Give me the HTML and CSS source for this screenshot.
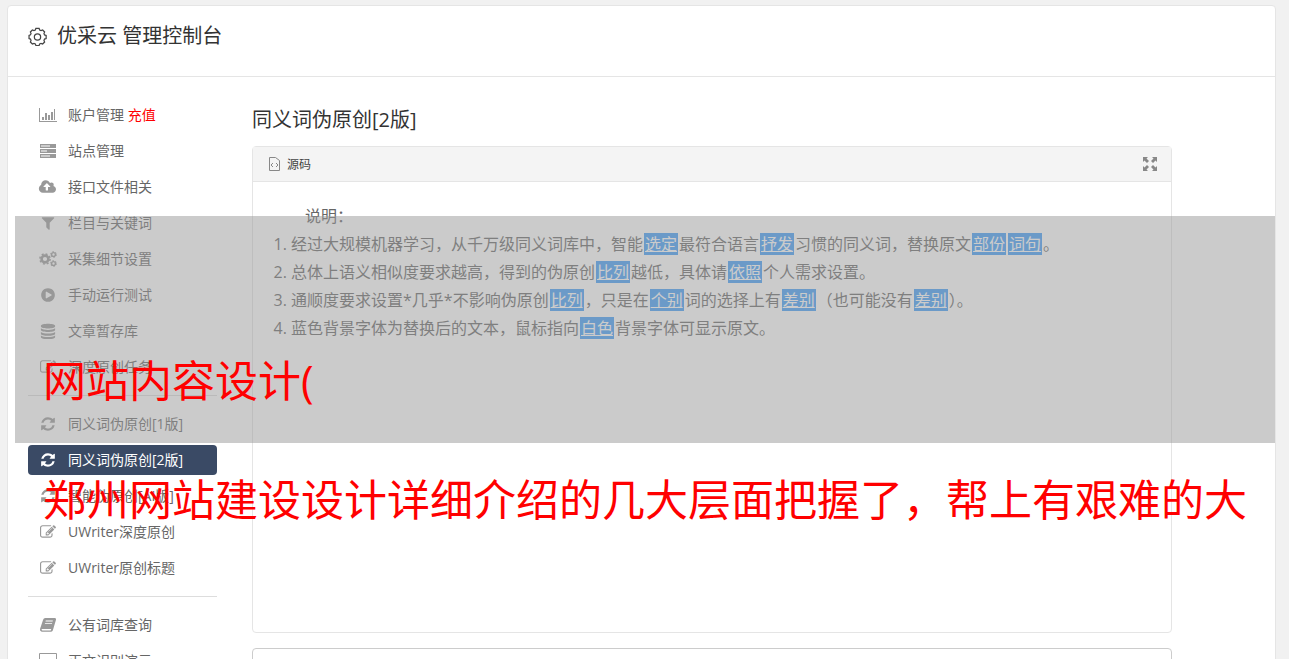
FILE: index.html
```
<!DOCTYPE html>
<html lang="zh-CN">
<head>
  <meta charset="UTF-8">
  <meta name="viewport" content="width=device-width, initial-scale=1.0">
  <title>优采云 管理控制台</title>
  <link rel="stylesheet" href="styles.css">
</head>
<body>

  <!-- Shared icons -->
  <svg class="sprite" aria-hidden="true">
    <symbol id="i-refresh" viewBox="0 0 1792 1792"><path d="M1639 1056q0 5-1 7-64 268-268 434.500t-478 166.500q-146 0-282.500-55t-243.500-157l-129 129q-19 19-45 19t-45-19-19-45v-448q0-26 19-45t45-19h448q26 0 45 19t19 45-19 45l-137 137q71 66 161 102t187 36q134 0 250-65t186-179q11-17 53-117 8-23 30-23h192q13 0 22.500 9.500t9.500 22.500zm25-800v448q0 26-19 45t-45 19h-448q-26 0-45-19t-19-45 19-45l138-138q-148-137-349-137-134 0-250 65t-186 179q-11 17-53 117-8 23-30 23h-199q-13 0-22.500-9.500t-9.500-22.500v-7q65-268 270-434.500t480-166.500q146 0 284 55.500t245 156.500l130-129q19-19 45-19t45 19 19 45z"/></symbol>
    <symbol id="i-edit" viewBox="0 0 1792 1792"><path d="M888 1184l116-116-152-152-116 116v56h96v96h56zm440-720q-16-16-33 1l-350 350q-17 17-1 33t33-1l350-350q17-17 1-33zm80 594v190q0 119-84.500 203.500t-203.500 84.500h-832q-119 0-203.500-84.500t-84.500-203.500v-832q0-119 84.500-203.500t203.500-84.500h832q63 0 117 25 15 7 18 23 3 17-9 29l-49 49q-14 14-32 8-23-6-45-6h-832q-66 0-113 47t-47 113v832q0 66 47 113t113 47h832q66 0 113-47t47-113v-126q0-13 9-22l64-64q15-15 35-7t20 29zm-96-738l288 288-672 672h-288v-288zm444 132l-92 92-288-288 92-92q28-28 68-28t68 28l152 152q28 28 28 68t-28 68z"/></symbol>
  </svg>

  <div class="panel">
    <header class="panel-header">
      <svg class="gear" viewBox="0 0 20 20" aria-hidden="true">
        <path d="M8.300 1.500h3.400l.6 1.700 1.400.6 1.700-.7 2.100 2.100-.7 1.700.6 1.400 1.700.6v3.200l-1.700.6-.6 1.400.7 1.700-2.100 2.100-1.700-.7-1.400.6-.6 1.700H8.300l-.6-1.700-1.400-.6-1.700.7-2.100-2.100.7-1.700-.6-1.400-1.500-.6V8.900l1.500-.6.6-1.400-.7-1.700 2.100-2.100 1.700.7 1.400-.6z"/>
        <circle cx="10" cy="10.500" r="3.300"/>
      </svg>
      <h1>优采云 管理控制台</h1>
    </header>

    <div class="panel-body">
      <!-- Sidebar -->
      <nav class="sidebar">
        <a class="item" href="#">
          <svg class="icon" viewBox="0 2 20 16"><path d="M1 3h1v13h17v1H1zM4 12h2v3H4zM7 8h2v7H7zM10 10h2v5h-2zM13 7h2v8h-2zM16 4h1v11h-1z"/></svg>
          <span>账户管理 <em>充值</em></span>
        </a>
        <a class="item" href="#">
          <svg class="icon" viewBox="0 2 20 16"><path fill-rule="evenodd" d="M2 3h16v4H2zM3 4.500v1h9v-1zM2 8h16v4H2zM3 9.500v1h6v-1zM2 13h16v4H2zM3 14.500v1h9v-1z"/></svg>
          <span>站点管理</span>
        </a>
        <a class="item" href="#">
          <svg class="icon" viewBox="0 0 1920 1792"><path d="M1216 864q0-14-9-23l-352-352q-9-9-23-9t-23 9l-351 351q-10 12-10 24 0 14 9 23t23 9h224v352q0 13 9.500 22.500t22.500 9.500h192q13 0 22.500-9.500t9.500-22.500v-352h224q13 0 22.500-9.500t9.500-22.500zm640 288q0 159-112.500 271.500t-271.500 112.500h-1088q-185 0-316.500-131.500t-131.500-316.500q0-130 70-240t188-165q-2-30-2-43 0-212 150-362t362-150q156 0 285.500 87t188.500 231q71-62 166-62 106 0 181 75t75 181q0 76-41 138 130 31 213.500 135.500t83.500 238.500z"/></svg>
          <span>接口文件相关</span>
        </a>
        <a class="item" href="#">
          <svg class="icon" viewBox="0 0 1792 1792"><path d="M1595 295q17 41-14 70l-493 493v742q0 42-39 59-13 5-25 5-27 0-45-19l-256-256q-19-19-19-45v-486l-493-493q-31-29-14-70 17-39 59-39h1280q42 0 59 39z"/></svg>
          <span>栏目与关键词</span>
        </a>
        <a class="item" href="#">
          <svg class="icon cogs" viewBox="0 2 20 16">
            <circle cx="7" cy="10" r="3.400" stroke-width="2.600"/>
            <circle cx="7" cy="10" r="5.100" stroke-width="1.500" stroke-dasharray="2 2"/>
            <circle cx="15.500" cy="5.500" r="1.900" stroke-width="1.400"/>
            <circle cx="15.500" cy="5.500" r="2.900" stroke-width="1" stroke-dasharray="1.520 1.520"/>
            <circle cx="15.500" cy="14.500" r="1.900" stroke-width="1.400"/>
            <circle cx="15.500" cy="14.500" r="2.900" stroke-width="1" stroke-dasharray="1.520 1.520"/>
          </svg>
          <span>采集细节设置</span>
        </a>
        <a class="item" href="#">
          <svg class="icon" viewBox="0 0 1792 1792"><path d="M896 128q209 0 385.500 103t279.500 279.500 103 385.500-103 385.500-279.500 279.500-385.500 103-385.500-103-279.500-279.500-103-385.500 103-385.500 279.500-279.500 385.500-103zm384 823q32-18 32-55t-32-55l-544-320q-31-19-64-1-32 19-32 56v640q0 37 32 56 16 8 32 8 17 0 32-9z"/></svg>
          <span>手动运行测试</span>
        </a>
        <a class="item" href="#">
          <svg class="icon" viewBox="-1 1 22 18"><path d="M2 4c0-3 16-3 16 0v1c0 3-16 3-16 0zM2 7c3 2.500 13 2.500 16 0v2c0 3-16 3-16 0zM2 11c3 2.500 13 2.500 16 0v2c0 3-16 3-16 0zM2 15c3 2.500 13 2.500 16 0v2c0 3-16 3-16 0z"/></svg>
          <span>文章暂存库</span>
        </a>
        <a class="item" href="#">
          <svg class="icon"><use href="#i-edit"/></svg>
          <span>深度原创任务</span>
        </a>
        <hr>
        <a class="item" href="#">
          <svg class="icon"><use href="#i-refresh"/></svg>
          <span>同义词伪原创[1版]</span>
        </a>
        <a class="item active" href="#">
          <svg class="icon"><use href="#i-refresh"/></svg>
          <span>同义词伪原创[2版]</span>
        </a>
        <a class="item" href="#">
          <svg class="icon"><use href="#i-refresh"/></svg>
          <span>智能伪原创[AI版]</span>
        </a>
        <a class="item" href="#">
          <svg class="icon"><use href="#i-edit"/></svg>
          <span>UWriter深度原创</span>
        </a>
        <a class="item" href="#">
          <svg class="icon"><use href="#i-edit"/></svg>
          <span>UWriter原创标题</span>
        </a>
        <hr>
        <a class="item" href="#">
          <svg class="icon" viewBox="-1 1 22 18"><path fill-rule="evenodd" d="M7 2h11q1.500.5 1 2l-3.500 12q-.5 1.500-2 1.500H3q-2.500-.5-2-3L4.500 4Q5 2 7 2zM7.500 5l-.3 1h8l.3-1zM6.700 8l-.3 1h8l.3-1zM3 14.500q-.7 1.500.7 1.800h9.300l.7-1.800z"/></svg>
          <span>公有词库查询</span>
        </a>
        <a class="item" href="#">
          <svg class="icon" viewBox="0 2 20 16"><path fill-rule="evenodd" d="M2 2h16q1 0 1 1v11q0 1-1 1h-5v2h1v1H6v-1h1v-2H2q-1 0-1-1V3q0-1 1-1zM2 3v9h16V3z"/></svg>
          <span>正文识别演示</span>
        </a>
      </nav>

      <!-- Content -->
      <main class="content">
        <h2>同义词伪原创[2版]</h2>
        <section class="editor">
          <div class="toolbar">
            <button type="button" class="tool">
              <svg width="12" height="14" viewBox="0 0 12 14" aria-hidden="true"><path fill="none" stroke="#888" d="M1.500.500h6l4 3v10h-10zM5 6L3 8l2 2M8 6l2 2-2 2"/></svg>
              源码
            </button>
            <button type="button" class="tool" aria-label="全屏">
              <svg width="14" height="14" viewBox="0 0 14 14" aria-hidden="true"><path fill="#888" d="M0 0h5L3.500 1.500l2.500 2.500-2 2-2.500-2.500L0 5zM14 0v5l-1.500-1.500L10 6 8 4l2.500-2.500L9 0zM0 14V9l1.500 1.500L4 8l2 2-2.500 2.500L5 14zM14 14H9l1.500-1.500L8 10l2-2 2.500 2.500L14 9z"/></svg>
            </button>
          </div>
          <div class="editor-text">
            <p>说明：</p>
            <ol>
              <li>经过大规模机器学习，从千万级同义词库中，智能<mark>选定</mark>最符合语言<mark>抒发</mark>习惯的同义词，替换原文<mark>部份</mark><mark>词句</mark>。</li>
              <li>总体上语义相似度要求越高，得到的伪原创<mark>比列</mark>越低，具体请<mark>依照</mark>个人需求设置。</li>
              <li>通顺度要求设置*几乎*不影响伪原创<mark>比列</mark>，只是在<mark>个别</mark>词的选择上有<mark>差别</mark>（也可能没有<mark>差别</mark>）。</li>
              <li>蓝色背景字体为替换后的文本，鼠标指向<mark>白色</mark>背景字体可显示原文。</li>
            </ol>
          </div>
        </section>
        <textarea class="result" aria-label="结果"></textarea>
      </main>
    </div>
  </div>

  <!-- Caption over the page -->
  <div class="caption">
    <p class="band">网站内容设计(</p>
    <p>郑州网站建设设计详细介绍的几大层面把握了，帮上有艰难的大</p>
  </div>

</body>
</html>
```
FILE: styles.css
```
* {
  box-sizing: border-box;
}
body {
  height: 100vh;
  margin: 0;
  padding: 5px 13px 0 7px;
  overflow: hidden;
  background: #f1f1f1;
  color: #666;
  font-family: "Open Sans", "Noto Sans CJK SC", sans-serif;
  font-size: 14px;
}
.sprite {
  display: none;
}
h1, h2, p, ol {
  margin: 0;
  padding: 0;
}
h1, h2 {
  color: #333;
  font-size: 20px;
  font-weight: normal;
  line-height: 30px;
}
.panel {
  background: #fff;
  border: 1px solid #e5e5e5;
  border-radius: 4px;
}
.panel-header {
  display: flex;
  align-items: center;
  gap: 10px;
  height: 71px;
  padding: 0 20px 10px;
  border-bottom: 1px solid #e5e5e5;
}
.gear {
  width: 19px;
  height: 19px;
  fill: none;
  stroke: #444;
  stroke-width: 1.3;
}
.panel-body {
  display: flex;
  gap: 35px;
  padding: 23px 103px 20px 20px;
}

/* Sidebar */
.sidebar {
  flex: 0 0 189px;
}
.item {
  display: flex;
  align-items: center;
  gap: 10px;
  height: 30px;
  margin-bottom: 6px;
  padding: 0 10px;
  border-radius: 4px;
  color: #666;
  line-height: 30px;
  text-decoration: none;
  white-space: nowrap;
}
.item em {
  color: #f00;
  font-style: normal;
}
.icon {
  width: 20px;
  height: 16px;
  fill: #999;
}
.cogs {
  fill: none;
  stroke: #999;
}
.item.active {
  background: #3a4a65;
  color: #fff;
}
.active .icon {
  fill: #fff;
}
hr {
  height: 1px;
  margin: 13px 0;
  border: none;
  background: #ddd;
}

/* Content */
.content {
  flex: 1;
  min-width: 0;
  padding-top: 5px;
}
.editor {
  min-height: 487px;
  margin: 11px 0 15px;
  border: 1px solid #e5e5e5;
  border-radius: 4px;
}
.toolbar {
  display: flex;
  align-items: center;
  justify-content: space-between;
  height: 35px;
  padding: 0 14px 0 15px;
  border-bottom: 1px solid #e5e5e5;
  background: #f4f4f4;
}
.tool {
  display: flex;
  align-items: center;
  gap: 7px;
  padding: 0;
  border: none;
  background: none;
  color: #444;
  font: inherit;
  font-size: 12px;
}
.editor-text {
  padding: 20px;
  font-size: 16px;
  line-height: 28px;
}
.editor-text p {
  text-indent: 2em;
}
.editor-text ol {
  padding-left: 18px;
}
mark {
  margin: 0 1px;
  padding: 0 1px;
  background: #3f9df9;
  color: #fff;
  text-decoration: underline;
}
.result {
  display: block;
  width: 100%;
  height: 120px;
  border: 1px solid #ccc;
  border-radius: 4px;
  resize: none;
}

/* Caption */
.caption {
  position: absolute;
  top: 216px;
  left: 15px;
  right: 14px;
  color: #f00;
  font-size: 43px;
  line-height: 119px;
  white-space: nowrap;
  pointer-events: none;
}
.caption p {
  margin-top: -3px;
  padding-left: 28px;
}
.caption .band {
  margin-top: 0;
  padding: 105px 0 3px 28px;
  background: rgba(151, 151, 151, 0.5);
}
```
